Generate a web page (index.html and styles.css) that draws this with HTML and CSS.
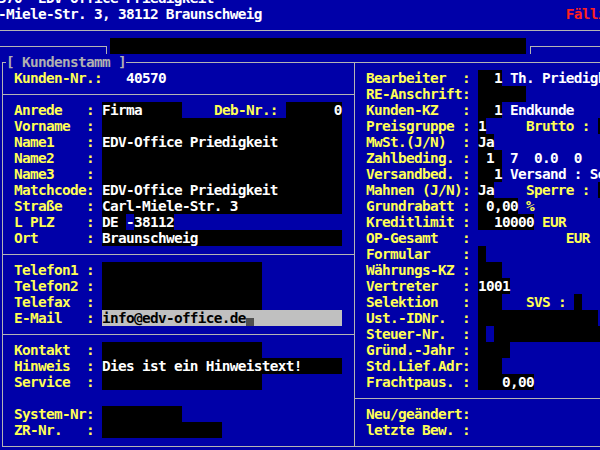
FILE: index.html
```html
<!DOCTYPE html>
<html lang="de">
<head>
    <meta charset="UTF-8">
    <title>Kundenstamm</title>
    <link rel="stylesheet" href="styles.css">
</head>
<body>

    <div class="screen">
        <div class="term">
            <div class="line"><span class="v">570  EDV-Office Priedigkeit</span></div>
            <div class="line"><span class="v">-Miele-Str. 3, 38112 Braunschweig</span><span class="alert">Fällig</span></div>
            <div class="rule"></div>
            <div class="line">
                <span class="corner-l"></span>
                <span class="fld w52"></span>
                <span class="corner-r"></span>
            </div>

            <div class="frame">
                <span class="legend">[ Kundenstamm ]</span>

                <section class="panel left">
                    <div class="row"><span class="k">Kunden-Nr.:   </span><span class="v">40570</span></div>
                    <div class="sep"></div>
                    <div class="row"><span class="k">Anrede   : </span><span class="fld w10">Firma</span><span class="k">    Deb-Nr.: </span><span class="fld w7 num">0</span></div>
                    <div class="row"><span class="k">Vorname  : </span><span class="fld w30"></span></div>
                    <div class="row"><span class="k">Name1    : </span><span class="fld w30">EDV-Office Priedigkeit</span></div>
                    <div class="row"><span class="k">Name2    : </span><span class="fld w30"></span></div>
                    <div class="row"><span class="k">Name3    : </span><span class="fld w30"></span></div>
                    <div class="row"><span class="k">Matchcode: </span><span class="fld w30">EDV-Office Priedigkeit</span></div>
                    <div class="row"><span class="k">Straße   : </span><span class="fld w30">Carl-Miele-Str. 3</span></div>
                    <div class="row"><span class="k">L PLZ    : </span><span class="fld">DE </span><span class="v">-</span><span class="fld">38112</span></div>
                    <div class="row"><span class="k">Ort      : </span><span class="fld w30">Braunschweig</span></div>
                    <div class="sep"></div>
                    <div class="row"><span class="k">Telefon1 : </span><span class="fld w20"></span></div>
                    <div class="row"><span class="k">Telefon2 : </span><span class="fld w20"></span></div>
                    <div class="row"><span class="k">Telefax  : </span><span class="fld w20"></span></div>
                    <div class="row"><span class="k">E-Mail   : </span><span class="fld w30 active">info@edv-office.de<span class="cursor"></span></span></div>
                    <div class="sep"></div>
                    <div class="row"><span class="k">Kontakt  : </span><span class="fld w20"></span></div>
                    <div class="row"><span class="k">Hinweis  : </span><span class="fld w30">Dies ist ein Hinweistext!</span></div>
                    <div class="row"><span class="k">Service  : </span><span class="fld w20"></span></div>
                    <div class="row"></div>
                    <div class="row"><span class="k">System-Nr: </span><span class="fld w10"></span></div>
                    <div class="row"><span class="k">ZR-Nr.   : </span><span class="fld w15"></span></div>
                </section>

                <section class="panel right">
                    <div class="row"><span class="k">Bearbeiter  : </span><span class="fld w3 num">1</span><span class="v"> Th. Priedigkeit</span></div>
                    <div class="row"><span class="k">RE-Anschrift: </span><span class="fld w6"></span></div>
                    <div class="row"><span class="k">Kunden-KZ   : </span><span class="fld w3 num">1</span><span class="v"> Endkunde</span></div>
                    <div class="row"><span class="k">Preisgruppe : </span><span class="fld w1">1</span><span class="k">     Brutto : </span><span class="fld w3"></span></div>
                    <div class="row"><span class="k">MwSt.(J/N)  : </span><span class="fld w2">Ja</span></div>
                    <div class="row"><span class="k">Zahlbeding. : </span><span class="fld w3"> 1</span><span class="v"> 7  0.0  0</span></div>
                    <div class="row"><span class="k">Versandbed. : </span><span class="fld w3 num">1</span><span class="v"> Versand : Se</span></div>
                    <div class="row"><span class="k">Mahnen (J/N): </span><span class="fld w2">Ja</span><span class="k">    Sperre : </span><span class="fld w3"></span></div>
                    <div class="row"><span class="k">Grundrabatt : </span><span class="fld w5 num">0,00</span><span class="k"> %</span></div>
                    <div class="row"><span class="k">Kreditlimit : </span><span class="fld w7 num">10000</span><span class="k"> EUR</span></div>
                    <div class="row"><span class="k">OP-Gesamt   : </span><span class="k">           EUR</span></div>
                    <div class="row"><span class="k">Formular    : </span><span class="fld w1"></span></div>
                    <div class="row"><span class="k">Währungs-KZ : </span><span class="fld w3"></span></div>
                    <div class="row"><span class="k">Vertreter   : </span><span class="fld w4">1001</span></div>
                    <div class="row"><span class="k">Selektion   : </span><span class="fld w3"></span><span class="k">   SVS : </span><span class="fld w1"></span></div>
                    <div class="row"><span class="k">Ust.-IDNr.  : </span><span class="fld w15"></span></div>
                    <div class="row"><span class="k">Steuer-Nr.  : </span><span class="fld w1"></span><span class="v"> </span><span class="fld w15"></span></div>
                    <div class="row"><span class="k">Gründ.-Jahr : </span><span class="fld w4"></span></div>
                    <div class="row"><span class="k">Std.Lief.Adr: </span><span class="fld w3"></span></div>
                    <div class="row"><span class="k">Frachtpaus. : </span><span class="fld w7 num">0,00</span></div>
                    <div class="sep"></div>
                    <div class="row"><span class="k">Neu/geändert: </span></div>
                    <div class="row"><span class="k">letzte Bew. : </span></div>
                </section>
            </div>
        </div>
    </div>

</body>
</html>
```

FILE: styles.css
```css
:root {
    --cw: 8px;
    --blue: #0000a8;
    --line: #b4b4b4;
}
body {
    margin: 0;
    background-color: var(--blue);
}
.screen {
    width: 600px;
    height: 450px;
    overflow: hidden;
    background-color: var(--blue);
}
.term {
    width: calc(var(--cw) * 76);
    margin: -10px 0 0 -2px;
    font-family: "DejaVu Sans Mono", "Liberation Mono", monospace;
    font-size: 14.4px;
    letter-spacing: -0.67px;
    font-weight: bold;
    line-height: 16px;
    white-space: nowrap;
    color: #ffffff;
}
.line, .row {
    display: flex;
    height: 16px;
    overflow: hidden;
}
.line > *, .row > * {
    flex: none;
    white-space: pre;
}
.k {
    color: #ffff54;
}
.v {
    color: #ffffff;
}
.alert {
    color: #ff2020;
    margin-left: calc(var(--cw) * 38);
}
.fld {
    display: inline-block;
    background-color: #000;
    color: #fff;
}
.fld.num {
    text-align: right;
}
.fld.active {
    background-color: #c0c0c0;
    color: #000;
}
.cursor {
    display: inline-block;
    width: var(--cw);
    height: 16px;
    vertical-align: top;
    background: linear-gradient(transparent 50%, #505050 50%);
}
.w1 { width: var(--cw); }
.w2 { width: calc(var(--cw) * 2); }
.w3 { width: calc(var(--cw) * 3); }
.w4 { width: calc(var(--cw) * 4); }
.w5 { width: calc(var(--cw) * 5); }
.w6 { width: calc(var(--cw) * 6); }
.w7 { width: calc(var(--cw) * 7); }
.w10 { width: calc(var(--cw) * 10); }
.w15 { width: calc(var(--cw) * 15); }
.w20 { width: calc(var(--cw) * 20); }
.w30 { width: calc(var(--cw) * 30); }
.w52 { width: calc(var(--cw) * 52); }

/* box lines run through the middle of a character cell */
.rule {
    height: 8px;
    border-bottom: 1px solid var(--line);
    margin-bottom: 7px;
}
.corner-l {
    width: 109px;
    height: 8px;
    margin: 8px 3px 0 0;
    border-top: 1px solid var(--line);
    border-right: 1px solid var(--line);
    box-sizing: border-box;
}
.corner-r {
    flex: 1 !important;
    height: 8px;
    margin: 8px 0 0 4px;
    border-top: 1px solid var(--line);
    border-left: 1px solid var(--line);
    box-sizing: border-box;
}
.frame {
    position: relative;
    display: grid;
    grid-template-columns: calc(var(--cw) * 44) 1fr;
    margin: 8px 0 0 4px;
    border: 1px solid var(--line);
    border-right: none;
}
.legend {
    position: absolute;
    top: -9px;
    left: 3px;
    height: 16px;
    white-space: pre;
    background-color: var(--blue);
    color: #b0b0b0;
}
.panel {
    padding: 7px 0 8px;
    overflow: hidden;
}
.panel.left {
    border-right: 1px solid var(--line);
}
.panel .row {
    padding-left: 11px;
}
.sep {
    height: 8px;
    border-bottom: 1px solid var(--line);
    margin-bottom: 7px;
}
```
